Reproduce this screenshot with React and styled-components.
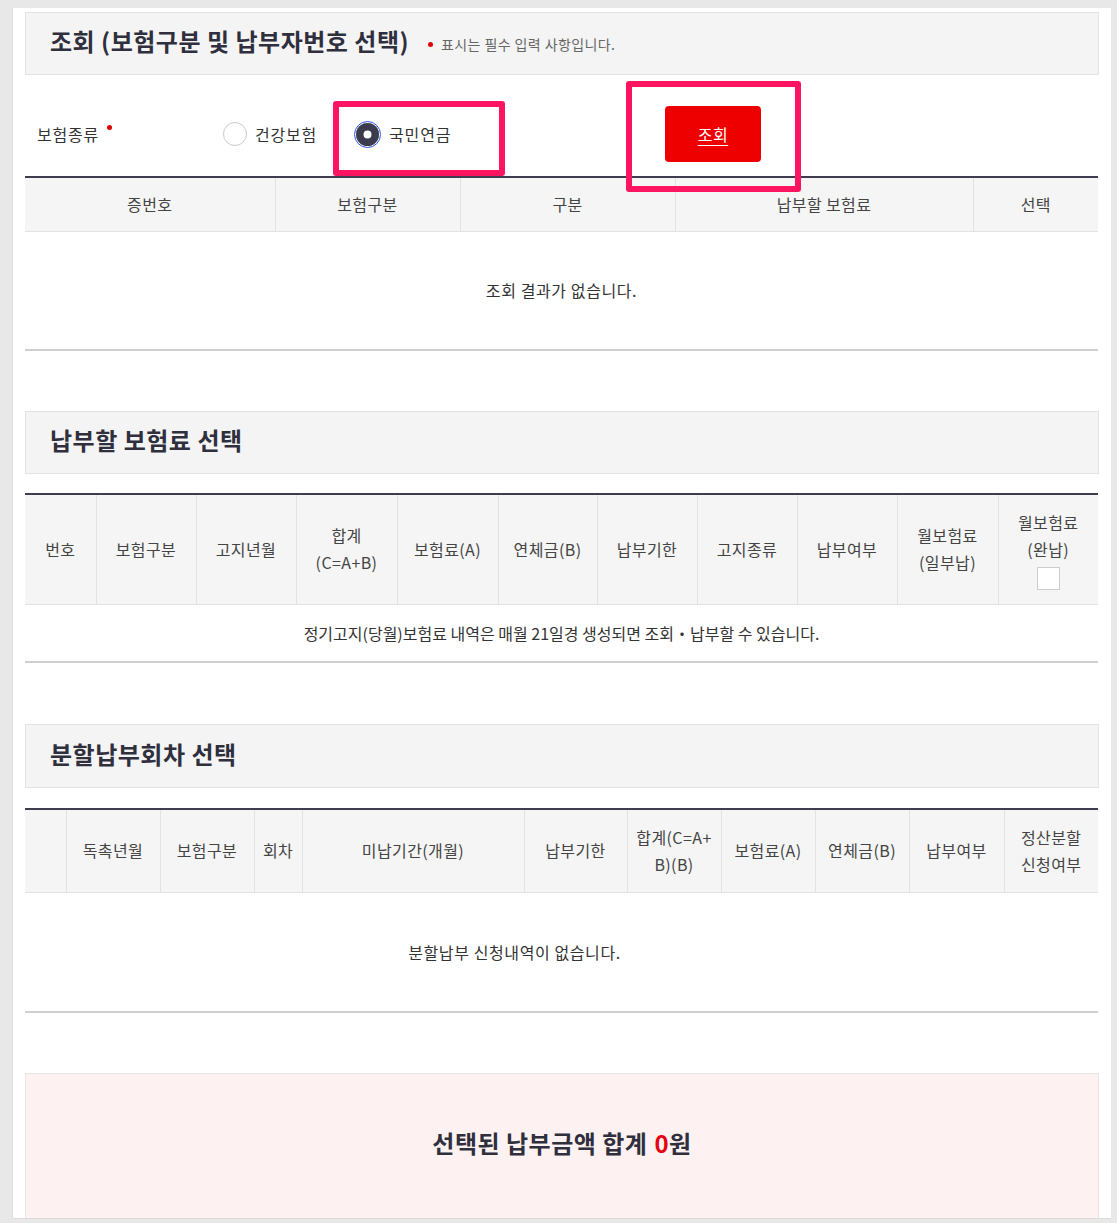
import React from "react";
import styled, { createGlobalStyle } from "styled-components";

const GlobalStyle = createGlobalStyle`
  html, body {
    margin: 0;
    padding: 0;
    background: #e8e8e8;
  }
  body {
    font-family: "Noto Sans CJK KR", "Noto Sans", sans-serif;
    color: #333;
  }
  * {
    box-sizing: border-box;
  }
`;

const Panel = styled.div`
  width: 1099px;
  margin: 8px 0 0 12px;
  padding: 4px 12px 0 12px;
  background: #fff;
  border-left: 1px solid #dcdcdc;
  border-bottom: 1px solid #dcdcdc;
`;

const SectionHead = styled.div`
  height: ${(p) => p.$h || 63}px;
  display: flex;
  align-items: center;
  padding: 0 0 6px 24px;
  margin-top: ${(p) => p.$top || 0}px;
  background: #f4f4f4;
  border: 1px solid #e3e3e3;
`;

const Title = styled.h2`
  margin: 0;
  font-size: 24px;
  font-weight: 700;
  color: #2f2f3d;
  letter-spacing: 0.5px;
`;

const Note = styled.span`
  display: flex;
  align-items: center;
  margin-left: 19px;
  margin-top: 7px;
  font-size: 14px;
  color: #666;
  letter-spacing: 0.4px;
`;

const Dot = styled.span`
  display: inline-block;
  width: 5px;
  height: 5px;
  border-radius: 50%;
  background: #e00000;
  margin: ${(p) => p.$m || "0 8px 0 0"};
`;

const SearchRow = styled.div`
  height: 101px;
  display: flex;
  align-items: center;
  padding: 31px 0 14px 12px;
`;

const FieldLabel = styled.div`
  width: 186px;
  display: flex;
  align-items: flex-start;
  font-size: 16px;
  letter-spacing: 0.8px;
  color: #333;
`;

const RadioGroup = styled.div`
  width: 442px;
  display: flex;
  align-items: center;
  gap: 37px;
`;

const RadioItem = styled.label`
  position: relative;
  display: flex;
  align-items: center;
  gap: 8px;
  font-size: 16px;
  letter-spacing: 0.8px;
  color: #333;
`;

const RadioCircle = styled.span`
  width: ${(p) => (p.$checked ? 27 : 24)}px;
  height: ${(p) => (p.$checked ? 27 : 24)}px;
  border-radius: 50%;
  display: flex;
  align-items: center;
  justify-content: center;
  background: #fff;
  border: 1px solid ${(p) => (p.$checked ? "#2c55e8" : "#c9c9c9")};

  &::before {
    content: "";
    display: ${(p) => (p.$checked ? "block" : "none")};
    width: 23px;
    height: 23px;
    border-radius: 50%;
    background: #3b3b4d;
    box-shadow: inset 0 0 0 7.5px #3b3b4d, inset 0 0 0 12px #fff;
  }
`;

const Annotation = styled.span`
  position: absolute;
  left: ${(p) => p.$l}px;
  top: ${(p) => p.$t}px;
  width: ${(p) => p.$w}px;
  height: ${(p) => p.$h}px;
  border: 6px solid #ff1462;
  border-radius: 3px;
  pointer-events: none;
`;

const ButtonWrap = styled.div`
  position: relative;
`;

const SearchButton = styled.button`
  width: 96px;
  height: 56px;
  border: 0;
  border-radius: 4px;
  background: #ee0000;
  color: #fff;
  font-family: inherit;
  font-size: 16px;
  letter-spacing: 0.5px;
  text-decoration: underline;
  text-decoration-thickness: 1px;
  text-underline-offset: 4px;
`;

const Table = styled.table`
  width: 1073px;
  margin-top: ${(p) => p.$top || 0}px;
  table-layout: fixed;
  border-collapse: collapse;
  border-top: 2px solid #3d3d4f;
`;

const Th = styled.th`
  height: ${(p) => p.$h}px;
  padding: 0 2px;
  background: #f5f5f5;
  font-size: 16px;
  font-weight: 400;
  line-height: 27px;
  color: #444;
  letter-spacing: 0.4px;
  border-bottom: 1px solid #e2e2e2;
  border-left: 1px solid #e2e2e2;
  vertical-align: middle;

  &:first-child {
    border-left: 0;
  }
`;

const Td = styled.td`
  height: ${(p) => p.$h}px;
  text-align: center;
  font-size: 16px;
  color: #333;
  letter-spacing: ${(p) => (p.$tight ? 0 : 0.6)}px;
  border-bottom: 2px solid #cfcfcf;
`;

const CheckBox = styled.span`
  display: block;
  width: 23px;
  height: 23px;
  margin: 4px auto 0;
  background: #fff;
  border: 1px solid #cdcdcd;
`;

const Summary = styled.div`
  height: 145px;
  margin-top: 60px;
  display: flex;
  align-items: center;
  justify-content: center;
  padding-bottom: 8px;
  background: #fdf1f1;
  border: 1px solid #e6e6e6;
  border-bottom: 0;
  font-size: 24px;
  font-weight: 700;
  color: #2f2f3d;
  letter-spacing: 0.5px;
`;

const Red = styled.span`
  color: #e60012;
  margin-left: 7px;
`;

const Cols = ({ widths }) => (
  <colgroup>
    {widths.map((w, i) => (
      <col key={i} style={{ width: w }} />
    ))}
  </colgroup>
);

const table1Cols = [250, 185, 215, 298, 125];
const table2Cols = [71, 100, 100, 101, 101, 99, 100, 100, 100, 101, 100];
const table3Cols = [41, 94, 94, 48, 222, 103, 94, 94, 94, 95, 94];

export default function App() {
  return (
    <>
      <GlobalStyle />
      <Panel>
        <SectionHead>
          <Title>조회 (보험구분 및 납부자번호 선택)</Title>
          <Note>
            <Dot />
            표시는 필수 입력 사항입니다.
          </Note>
        </SectionHead>

        <SearchRow>
          <FieldLabel>
            보험종류
            <Dot $m="3px 0 0 8px" />
          </FieldLabel>
          <RadioGroup>
            <RadioItem>
              <RadioCircle />
              건강보험
            </RadioItem>
            <RadioItem>
              <RadioCircle $checked />
              국민연금
              <Annotation $l={-21} $t={-20} $w={172} $h={75} />
            </RadioItem>
          </RadioGroup>
          <ButtonWrap>
            <SearchButton>조회</SearchButton>
            <Annotation $l={-39} $t={-25} $w={175} $h={111} />
          </ButtonWrap>
        </SearchRow>

        <Table>
          <Cols widths={table1Cols} />
          <thead>
            <tr>
              <Th $h={54}>증번호</Th>
              <Th $h={54}>보험구분</Th>
              <Th $h={54}>구분</Th>
              <Th $h={54}>납부할 보험료</Th>
              <Th $h={54}>선택</Th>
            </tr>
          </thead>
          <tbody>
            <tr>
              <Td $h={119} colSpan={5}>
                조회 결과가 없습니다.
              </Td>
            </tr>
          </tbody>
        </Table>

        <SectionHead $top={60}>
          <Title>납부할 보험료 선택</Title>
        </SectionHead>

        <Table $top={19}>
          <Cols widths={table2Cols} />
          <thead>
            <tr>
              <Th $h={110}>번호</Th>
              <Th $h={110}>보험구분</Th>
              <Th $h={110}>고지년월</Th>
              <Th $h={110}>
                합계
                <br />
                (C=A+B)
              </Th>
              <Th $h={110}>보험료(A)</Th>
              <Th $h={110}>연체금(B)</Th>
              <Th $h={110}>납부기한</Th>
              <Th $h={110}>고지종류</Th>
              <Th $h={110}>납부여부</Th>
              <Th $h={110}>
                월보험료
                <br />
                (일부납)
              </Th>
              <Th $h={110}>
                월보험료
                <br />
                (완납)
                <CheckBox />
              </Th>
            </tr>
          </thead>
          <tbody>
            <tr>
              <Td $h={58} colSpan={11} $tight>
                정기고지(당월)보험료 내역은 매월 21일경 생성되면 조회・납부할 수 있습니다.
              </Td>
            </tr>
          </tbody>
        </Table>

        <SectionHead $top={61} $h={64}>
          <Title>분할납부회차 선택</Title>
        </SectionHead>

        <Table $top={20}>
          <Cols widths={table3Cols} />
          <thead>
            <tr>
              <Th $h={83}></Th>
              <Th $h={83}>독촉년월</Th>
              <Th $h={83}>보험구분</Th>
              <Th $h={83}>회차</Th>
              <Th $h={83}>미납기간(개월)</Th>
              <Th $h={83}>납부기한</Th>
              <Th $h={83}>
                합계(C=A+
                <br />
                B)(B)
              </Th>
              <Th $h={83}>보험료(A)</Th>
              <Th $h={83}>연체금(B)</Th>
              <Th $h={83}>납부여부</Th>
              <Th $h={83}>
                정산분할
                <br />
                신청여부
              </Th>
            </tr>
          </thead>
          <tbody>
            <tr>
              <Td $h={120} colSpan={10}>
                분할납부 신청내역이 없습니다.
              </Td>
              <Td $h={120}></Td>
            </tr>
          </tbody>
        </Table>

        <Summary>
          선택된 납부금액 합계
          <Red>0</Red>원
        </Summary>
      </Panel>
    </>
  );
}
